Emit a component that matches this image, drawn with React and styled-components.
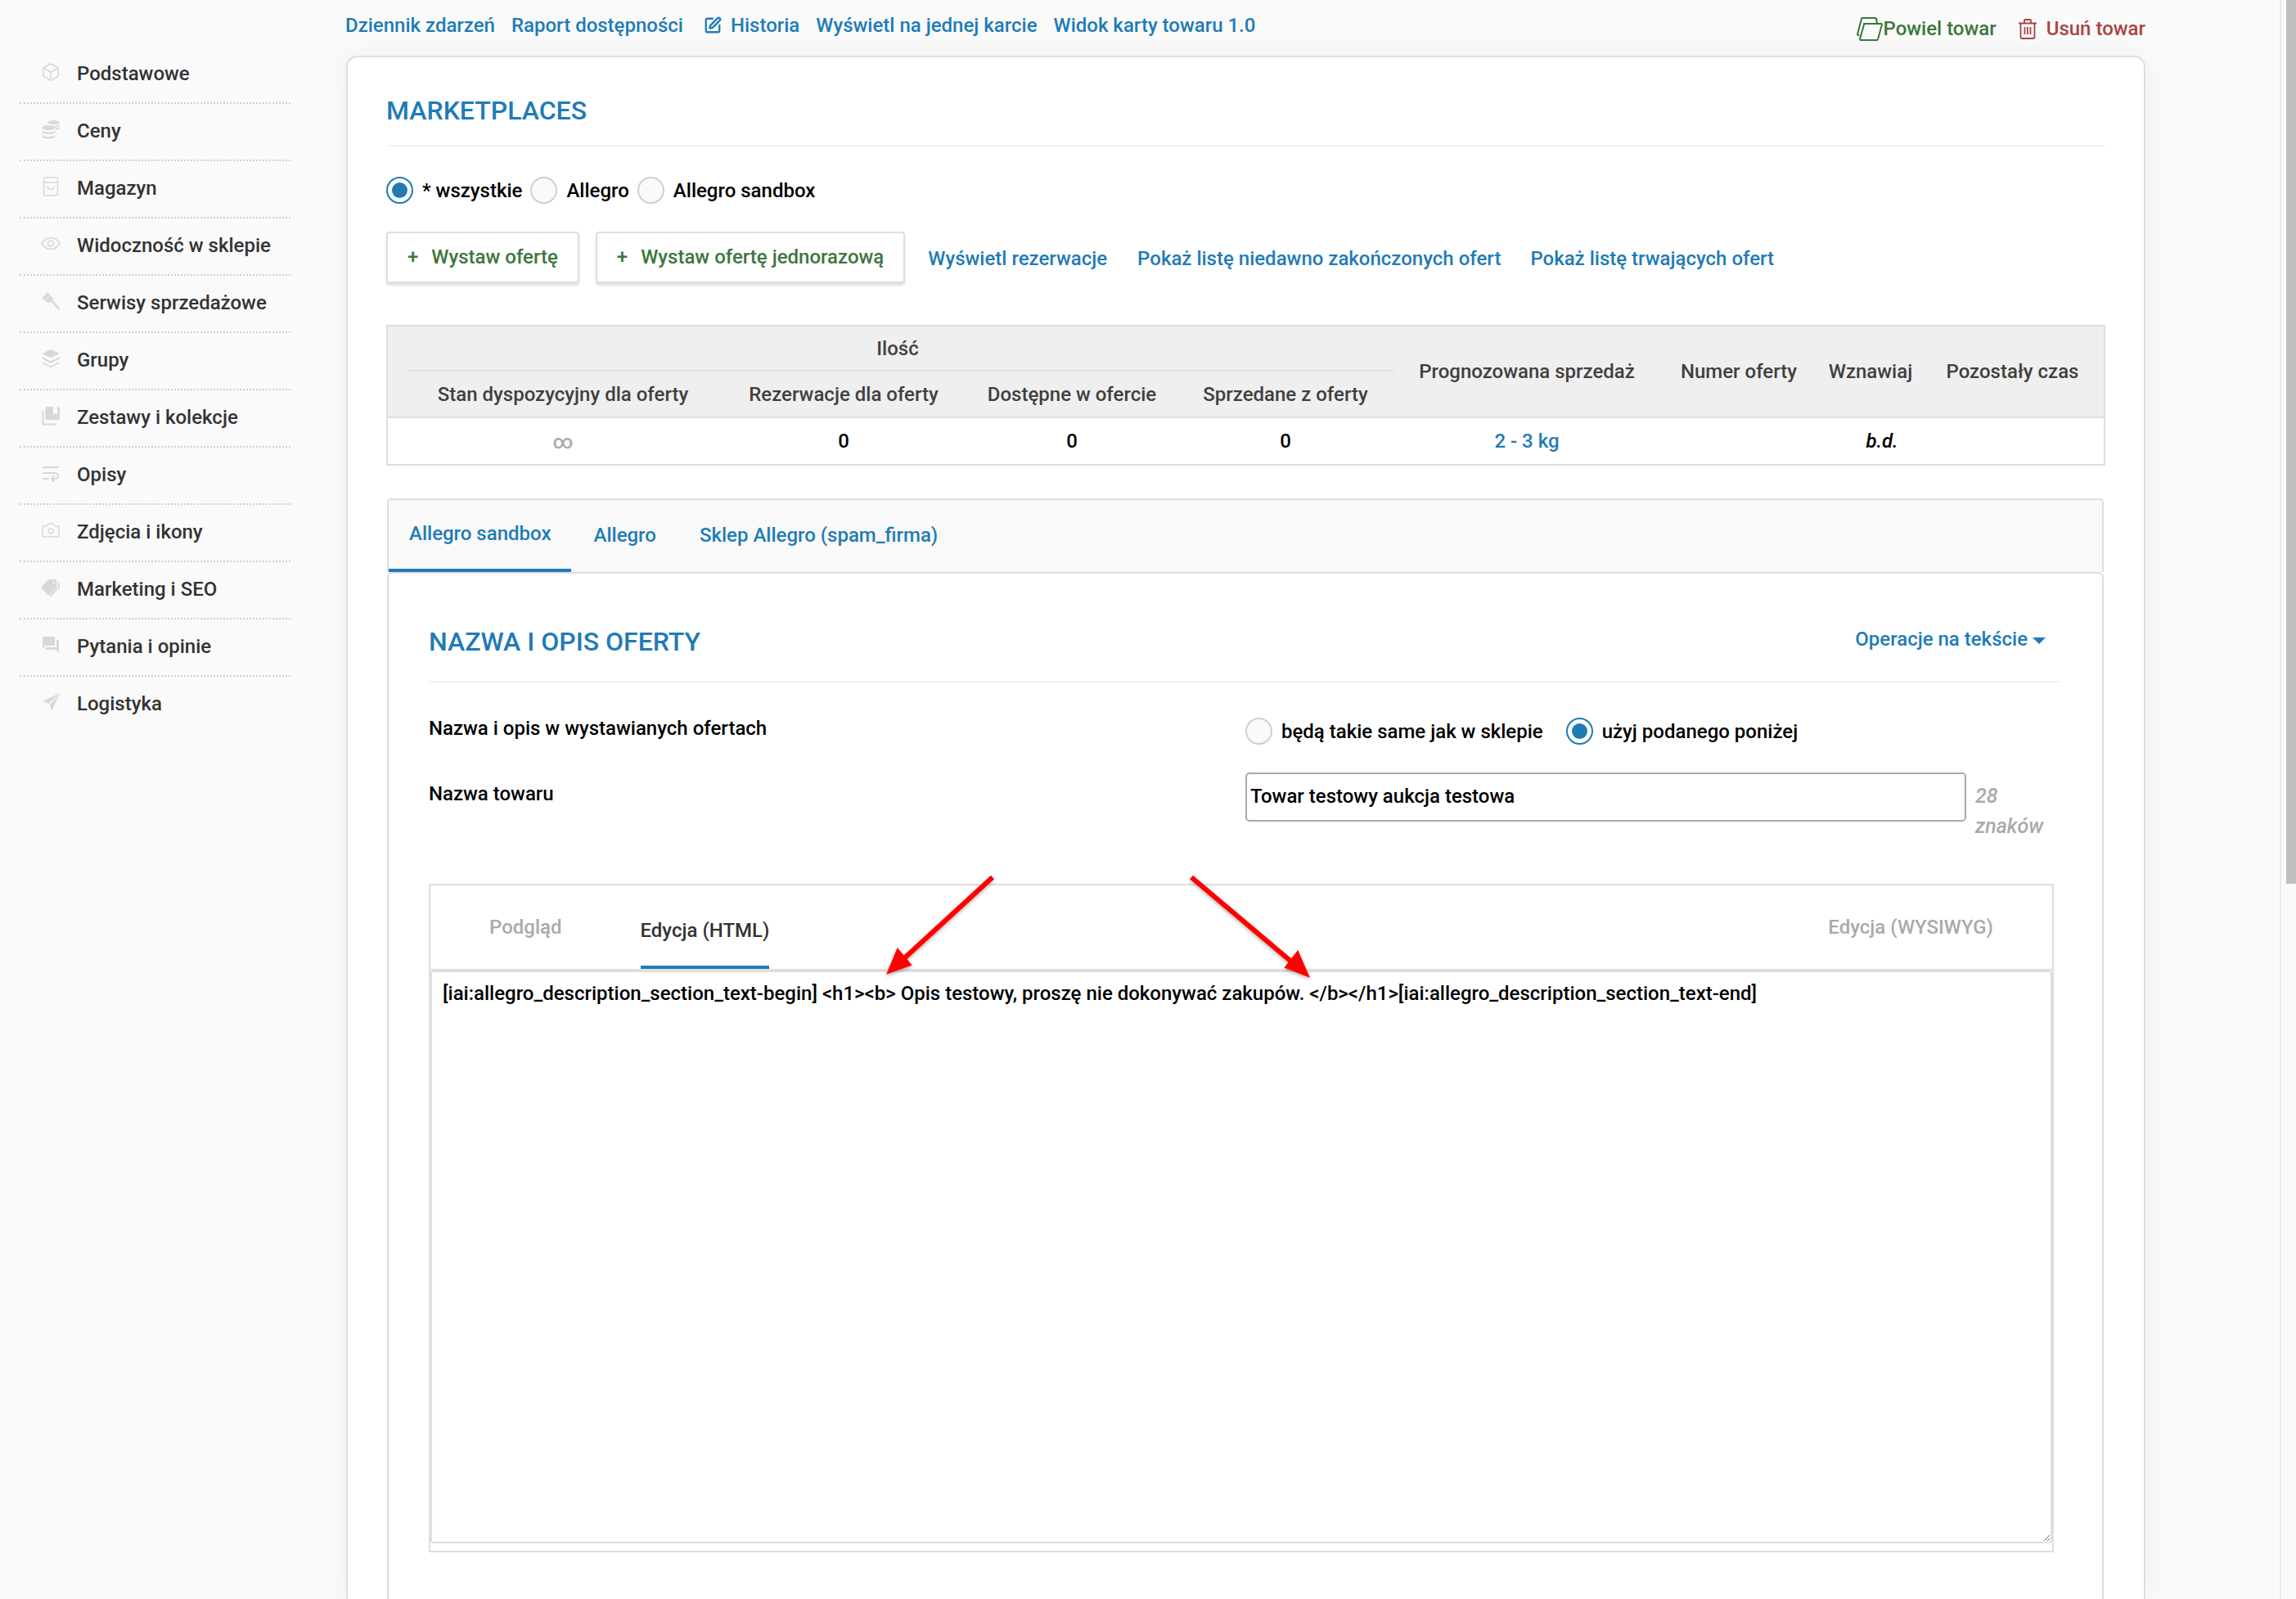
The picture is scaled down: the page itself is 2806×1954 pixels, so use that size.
import React from "react";
import styled, { createGlobalStyle } from "styled-components";
import { SquarePen, Box, Camera, WrapText } from "lucide-react";
import { MdForum } from "react-icons/md";

const Global = createGlobalStyle`
  html, body { margin: 0; padding: 0; overflow: hidden; background: #fafafa; }
  * { box-sizing: border-box; }
  body { font-family: Roboto, "Liberation Sans", sans-serif; font-weight: 500; font-size: 24px; line-height: 28px; color: #000; }
`;

const BLUE = "#1f7bb6";
const GREEN = "#3c763d";
const RED = "#a94442";
const LINE = "#dedede";

const Page = styled.div`
  position: relative; display: flex; width: 2806px; height: 1954px; overflow: hidden; background: #fafafa;
`;
const Sidebar = styled.nav`
  flex: 0 0 422px; padding: 57px 0 0 24px; display: flex; flex-direction: column;
`;
const SideItem = styled.div`
  width: 331px; height: 70px; padding: 0 0 3px 26px; display: flex; align-items: center;
  border-bottom: 2px dotted ${(p) => (p.$last ? "transparent" : "#cfcfcf")};
  color: #333; font-size: 24px;
`;
const SideIcon = styled.span`
  flex: 0 0 44px; display: flex; align-items: center; margin-top: -4px; color: #d8d8d8;
`;
const Main = styled.main`
  flex: 0 0 2200px; display: flex; flex-direction: column; min-width: 0;
`;
const TopBar = styled.div`
  height: 68px; flex: none; display: flex; justify-content: space-between;
`;
const TopLeft = styled.div`
  display: flex; align-items: center; gap: 20px; height: 62px;
`;
const TopRight = styled.div`
  display: flex; align-items: center; gap: 27px; height: 70px;
`;
const LinkA = styled.span`
  color: ${(p) => p.$color || BLUE}; display: inline-flex; align-items: center; white-space: nowrap; gap: ${(p) => p.$gap || 0}px;
  margin-left: ${(p) => p.$ml || 0}px;
`;
const Card = styled.section`
  flex: 1; background: #fff; border: 2px solid ${LINE}; border-bottom: 0; border-radius: 14px 14px 0 0;
  padding: 0 47px 0 47px; box-shadow: 0 0 36px rgba(0,0,0,.05); margin-left: 1px; min-height: 0; 
`;
const SectionHead = styled.div`
  height: ${(p) => p.$h}px; padding-top: ${(p) => p.$pt}px; border-bottom: 2px solid #f3f3f3;
  display: flex; align-items: center; justify-content: space-between;
`;
const Title = styled.h2`
  margin: 0; font-size: 32px; line-height: 40px; font-weight: 500; color: ${BLUE}; text-transform: uppercase;
`;
const RadioRow = styled.div`
  display: flex; align-items: center; margin-top: ${(p) => p.$mt || 0}px; height: 33px; white-space: nowrap;
`;
const RadioDot = styled.span`
  flex: none; width: 33px; height: 33px; border-radius: 50%; margin-left: ${(p) => p.$ml || 0}px; margin-right: 11px;
  background: ${(p) => (p.$on ? "#fff" : "#fafafa")};
  border: 2px solid ${(p) => (p.$on ? BLUE : "#cfcfcf")};
  display: flex; align-items: center; justify-content: center;
  &::after { content: ""; width: 19px; height: 19px; border-radius: 50%; background: ${(p) => (p.$on ? BLUE : "transparent")}; }
`;
const Actions = styled.div`
  display: flex; align-items: center; margin-top: 34px; height: 64px; white-space: nowrap;
`;
const Btn = styled.button`
  height: 63px; padding: 0 24px; margin: 0 ${(p) => p.$mr}px 0 0; background: #fff; border: 2px solid ${LINE}; border-radius: 4px;
  box-shadow: 0 3px 3px rgba(0,0,0,.12); font: inherit; color: ${GREEN}; display: inline-flex; align-items: center; gap: 16px; margin-top: -2px;
`;
const ActionLink = styled.span`
  color: ${BLUE}; margin-right: ${(p) => p.$mr}px; padding-top: 2px;
`;
const TableBox = styled.div`
  margin-top: 50px; border: 2px solid ${LINE}; 
`;
const COLS = "24px 380px 306px 252px 270px 322px 194px 128px 221px";
const HeadGrid = styled.div`
  display: grid; grid-template-columns: ${COLS}; grid-template-rows: 55px 55px; background: #efefef; border-bottom: 2px solid ${LINE}; color: #3f3f3f;
`;
const HeadCell = styled.div`
  grid-column: ${(p) => p.$col}; grid-row: ${(p) => p.$row}; display: flex; align-items: center; justify-content: center; white-space: nowrap;
  padding-right: ${(p) => p.$pr || 0}px;
  ${(p) => p.$rule && `border-bottom: 2px solid #e0e0e0; margin-right: 3px; padding-right: 7px;`}
`;
const BodyGrid = styled.div`
  display: grid; grid-template-columns: ${COLS}; height: 56px;
`;
const BodyCell = styled.div`
  grid-column: ${(p) => p.$col}; display: flex; align-items: center; justify-content: center; white-space: nowrap;
  padding-left: ${(p) => p.$pl || 0}px; padding-top: ${(p) => p.$pt || 0}px; padding-right: ${(p) => p.$pr || 0}px;
  color: ${(p) => p.$color || "#000"}; font-style: ${(p) => (p.$it ? "italic" : "normal")}; font-size: ${(p) => p.$fs || 24}px;
`;
const TabsWrap = styled.div`
  margin: 40px 2px 0 1px;
`;
const TabStrip = styled.div`
  height: 90px; background: #f9f9f9; border: 2px solid ${LINE}; border-bottom: 0; border-radius: 5px 5px 0 0; display: flex;
  align-items: stretch; gap: 1px;
`;
const TabItem = styled.div`
  padding: 0 ${(p) => p.$px}px 2px; display: flex; align-items: center; color: ${BLUE}; white-space: nowrap; height: 88px;
  ${(p) => p.$active && `border-bottom: 4px solid ${BLUE};`}
`;
const Panel = styled.div`
  border: 2px solid ${LINE}; border-radius: 6px 6px 0 0; border-bottom: 0; background: #fff; padding: 0 49px 60px 49px;
`;
const Form = styled.div`
  display: grid; grid-template-columns: 998px 1fr; margin-top: 43px; row-gap: 34px;
`;
const Label = styled.div`
  margin-top: -1px; padding-top: ${(p) => p.$pt || 0}px;
`;
const NameBox = styled.div`
  display: flex; gap: 11px; align-items: flex-start; height: 84px;
`;
const NameInput = styled.input`
  width: 881px; height: 60px; border: 2px solid #aaa; border-radius: 5px; padding: 0 4px 2px; font: inherit; color: #000; background: #fff; outline: none;
`;
const Counter = styled.div`
  padding-top: 10px; width: 92px; font-size: 25px; font-style: italic; color: #aaa; line-height: 37px;
`;
const Operations = styled.span`
  color: ${BLUE}; display: inline-flex; align-items: center; gap: 6px; margin: -6px 20px 0 0;
  &::after { content: ""; border-left: 8px solid transparent; border-right: 8px solid transparent; border-top: 8px solid ${BLUE}; margin-top: 3px; }
`;
const Editor = styled.div`
  margin-top: 52px; width: 1986px; border: 2px solid ${LINE}; padding-bottom: 9px;
`;
const EditorTabs = styled.div`
  height: 104px; border-bottom: 2px solid ${LINE}; display: flex; align-items: flex-start; padding: 0 72px 0 72px;
`;
const EditorTab = styled.div`
  height: 102px; white-space: nowrap; display: flex; align-items: center; box-sizing: border-box;
  margin-right: ${(p) => p.$mr || 0}px; margin-left: ${(p) => (p.$right ? "auto" : 0)};
  color: ${(p) => (p.$active ? "#333" : "#aaa")};
  padding: ${(p) => (p.$active ? "11px 0 0" : "0")};
  border-bottom: ${(p) => (p.$active ? `4px solid ${BLUE}` : "0")};
`;
const Area = styled.textarea`
  display: block; width: 100%; height: 700px; border: 2px solid ${LINE}; border-radius: 4px; padding: 12px 13px; margin: 0;
  font: inherit; color: #000; background: #fff; resize: both; outline: none; overflow: hidden;
`;
const Gutter = styled.div`
  margin-left: auto; flex: 0 0 20px; border-left: 2px solid #ebebeb; padding-left: 6px;
`;
const Thumb = styled.div`
  width: 12px; height: 1080px; background: #bfbfbf;
`;
const Overlay = styled.svg`
  position: absolute; left: 0; top: 0; pointer-events: none;
`;
const Ico = styled.svg`
  width: 24px; height: 24px; display: block; fill: currentColor;
`;

const Coins = () => (
  <Ico viewBox="0 0 24 24">
    <ellipse cx="15.5" cy="3.5" rx="7" ry="2.6" />
    <path d="M17 7.5c3 0 5.5-.8 6-2v2c-.5 1.2-3 2-6 2zM18 11c2.5-.2 4.6-.9 5-2v2c-.4 1.100-2.500 1.800-5 2z" />
    <ellipse cx="9.500" cy="10" rx="8" ry="3" />
    <path d="M1.500 12.500c0 1.700 3.600 3 8 3s8-1.300 8-3v2.500c0 1.700-3.600 3-8 3s-8-1.300-8-3zM1.500 18c0 1.700 3.600 3 8 3s8-1.300 8-3v2.500c0 1.700-3.600 3-8 3s-8-1.300-8-3z" />
  </Ico>
);
const Bag = () => (
  <Ico viewBox="0 0 24 24" style={{ fill: "none", stroke: "currentColor", strokeWidth: 1.5 }}>
    <path d="M3.500 7V3a2 2 0 0 1 2-2h13a2 2 0 0 1 2 2v4M3.500 7h17v14a2 2 0 0 1-2 2h-13a2 2 0 0 1-2-2z" />
    <path d="M8 11c0 3 2 4.500 4 4.500s4-1.500 4-4.500" />
  </Ico>
);
const Eye = () => (
  <Ico viewBox="0 0 24 24" style={{ fill: "none", stroke: "currentColor", strokeWidth: 1.500 }}>
    <path d="M.8 11.500C4 6.500 8 4.500 12 4.500s8 2 11.200 7C20 16.500 16 18.500 12 18.500s-8-2-11.200-7z" />
    <circle cx="12" cy="11.500" r="3.500" />
  </Ico>
);
const Gavel = () => (
  <Ico viewBox="0 0 24 24">
    <path d="M1 8.500 8 1.500 l3.500 2.500-7 7z" />
    <path d="M5 11.500 L11.500 5 l3.500 3.500-6 6z" />
    <path d="M11 11 l2-2 10.500 12-2 2z" />
  </Ico>
);
const Layers = () => (
  <Ico viewBox="0 0 24 24">
    <path d="M12 1 L22.500 6 L12 11.500 L1.500 6Z" />
    <path d="M1.500 10 L12 15.500 L22.500 10 V12.500 L12 18 L1.500 12.500Z" />
    <path d="M1.500 16 L12 21.500 L22.500 16 V18 L12 23.500 L1.500 18Z" />
  </Ico>
);
const Books = () => (
  <Ico viewBox="0 0 24 24">
    <path d="M1.500 6h2v15.500H19v2H3a1.500 1.500 0 0 1-1.500-1.500z" />
    <path d="M7 1h14.500A1.500 1.500 0 0 1 23 2.500v13a1.500 1.500 0 0 1-1.500 1.500H7a1.500 1.500 0 0 1-1.500-1.500v-13A1.500 1.500 0 0 1 7 1z" />
    <path d="M15 1h5v10l-2.500-2L15 11z" fill="#fafafa" />
  </Ico>
);
const Tags = () => (
  <Ico viewBox="0 0 24 24">
    <path d="M1 10.500 9.500 2h8a2 2 0 0 1 2 2v8L10.500 21a1.500 1.500 0 0 1-2 0L1 13a2 2 0 0 1 0-2.500z M15.500 5a1.200 1.200 0 1 0 .01 0z" fillRule="evenodd" />
    <path d="M22 6l1 1a2 2 0 0 1 0 2.500V12L13 22.500a1.500 1.500 0 0 1-2 0l-.5-.5 10.500-10.500V6z" />
  </Ico>
);
const Plane = () => (
  <Ico viewBox="0 0 24 24">
    <path d="M23 1 L2 11 L9.500 14 Z" />
    <path d="M23 1 L11 15.500 L13 23 Z" />
  </Ico>
);
const Copy = () => (
  <svg width="32" height="29" viewBox="0 0 32 29" fill="none" stroke={GREEN} strokeWidth="2" strokeLinejoin="round">
    <path d="M9 8h21a1 1 0 0 1 1 1l-5 18a1.500 1.500 0 0 1-1.500 1H5a1 1 0 0 1-1-1l5-18z" />
    <path d="M3 23 1 21 6 2a1 1 0 0 1 1-1h16a1 1 0 0 1 1 1l1 5" />
  </svg>
);
const Trash = () => (
  <svg width="22" height="25" viewBox="0 0 22 25" fill="none" stroke={RED} strokeWidth="1.800" strokeLinejoin="round">
    <path d="M0 5.500h22M7 5.500V2a1 1 0 0 1 1-1h6a1 1 0 0 1 1 1v3.500" />
    <path d="M2.500 5.500V22a2 2 0 0 0 2 2h13a2 2 0 0 0 2-2V5.500" />
    <path d="M7.500 10v9M11 10v9M14.500 10v9" />
  </svg>
);

const menu = [
  ["Podstawowe", <Box size={24} strokeWidth={1.5} />],
  ["Ceny", <Coins />],
  ["Magazyn", <Bag />],
  ["Widoczność w sklepie", <Eye />],
  ["Serwisy sprzedażowe", <Gavel />],
  ["Grupy", <Layers />],
  ["Zestawy i kolekcje", <Books />],
  ["Opisy", <WrapText size={24} strokeWidth={2} />],
  ["Zdjęcia i ikony", <Camera size={24} strokeWidth={1.5} />],
  ["Marketing i SEO", <Tags />],
  ["Pytania i opinie", <MdForum size={24} />],
  ["Logistyka", <Plane />],
];

const TEXT = "[iai:allegro_description_section_text-begin] <h1><b> Opis testowy, proszę nie dokonywać zakupów. </b></h1>[iai:allegro_description_section_text-end]";

export default function App() {
  return (
    <Page>
      <Global />
      <Sidebar>
        {menu.map(([label, icon], i) => (
          <SideItem key={label} $last={i === menu.length - 1}>
            <SideIcon>{icon}</SideIcon>
            {label}
          </SideItem>
        ))}
      </Sidebar>
      <Main>
        <TopBar>
          <TopLeft>
            <LinkA>Dziennik zdarzeń</LinkA>
            <LinkA>Raport dostępności</LinkA>
            <LinkA $gap={11} $ml={5}><SquarePen size={22} strokeWidth={2.5} />Historia</LinkA>
            <LinkA>Wyświetl na jednej karcie</LinkA>
            <LinkA>Widok karty towaru 1.0</LinkA>
          </TopLeft>
          <TopRight>
            <LinkA $color={GREEN}><Copy />Powiel towar</LinkA>
            <LinkA $color={RED} $gap={12}><Trash />Usuń towar</LinkA>
          </TopRight>
        </TopBar>
        <Card>
          <SectionHead $h={109} $pt={22}><Title>Marketplaces</Title></SectionHead>
          <RadioRow $mt={37}>
            <RadioDot $on />* wszystkie
            <RadioDot $ml={10} />Allegro
            <RadioDot $ml={10} />Allegro sandbox
          </RadioRow>
          <Actions>
            <Btn $mr={20}><span>+</span>Wystaw ofertę</Btn>
            <Btn $mr={28}><span>+</span>Wystaw ofertę jednorazową</Btn>
            <ActionLink $mr={37}>Wyświetl rezerwacje</ActionLink>
            <ActionLink $mr={36}>Pokaż listę niedawno zakończonych ofert</ActionLink>
            <ActionLink $mr={0}>Pokaż listę trwających ofert</ActionLink>
          </Actions>
          <TableBox>
            <HeadGrid>
              <HeadCell $col="2 / 6" $row="1" $rule>Ilość</HeadCell>
              <HeadCell $col="2" $row="2">Stan dyspozycyjny dla oferty</HeadCell>
              <HeadCell $col="3" $row="2">Rezerwacje dla oferty</HeadCell>
              <HeadCell $col="4" $row="2">Dostępne w ofercie</HeadCell>
              <HeadCell $col="5" $row="2">Sprzedane z oferty</HeadCell>
              <HeadCell $col="6" $row="1 / 3" $pr={2}>Prognozowana sprzedaż</HeadCell>
              <HeadCell $col="7" $row="1 / 3">Numer oferty</HeadCell>
              <HeadCell $col="8" $row="1 / 3">Wznawiaj</HeadCell>
              <HeadCell $col="9" $row="1 / 3" $pr={2}>Pozostały czas</HeadCell>
            </HeadGrid>
            <BodyGrid>
              <BodyCell $col="2" $color="#aaa" $fs={24} $pt={2}>∞</BodyCell>
              <BodyCell $col="3">0</BodyCell>
              <BodyCell $col="4">0</BodyCell>
              <BodyCell $col="5">0</BodyCell>
              <BodyCell $col="6" $color={BLUE} $pr={2}>2 - 3 kg</BodyCell>
              <BodyCell $col="8" $it $pl={28}>b.d.</BodyCell>
            </BodyGrid>
          </TableBox>
          <TabsWrap>
            <TabStrip>
              <TabItem $px={25} $active>Allegro sandbox</TabItem>
              <TabItem $px={26}>Allegro</TabItem>
              <TabItem $px={26}>Sklep Allegro (spam_firma)</TabItem>
            </TabStrip>
            <Panel>
              <SectionHead $h={133} $pt={35}>
                <Title>Nazwa i opis oferty</Title>
                <Operations>Operacje na tekście</Operations>
              </SectionHead>
              <Form>
                <Label>Nazwa i opis w wystawianych ofertach</Label>
                <RadioRow>
                  <RadioDot />będą takie same jak w sklepie
                  <RadioDot $on $ml={28} />użyj podanego poniżej
                </RadioRow>
                <Label $pt={13}>Nazwa towaru</Label>
                <NameBox>
                  <NameInput defaultValue="Towar testowy aukcja testowa" readOnly />
                  <Counter>28 znaków</Counter>
                </NameBox>
              </Form>
              <Editor>
                <EditorTabs>
                  <EditorTab $mr={96}>Podgląd</EditorTab>
                  <EditorTab $active>Edycja (HTML)</EditorTab>
                  <EditorTab $right>Edycja (WYSIWYG)</EditorTab>
                </EditorTabs>
                <Area defaultValue={TEXT} readOnly />
              </Editor>
            </Panel>
          </TabsWrap>
        </Card>
      </Main>
      <Gutter><Thumb /></Gutter>
      <Overlay width="2806" height="1954" viewBox="0 0 2806 1954">
        <defs>
          <filter id="arrowShadow" x="-20%" y="-20%" width="140%" height="140%">
            <feDropShadow dx="0" dy="2" stdDeviation="2" floodColor="#000" floodOpacity=".3" />
          </filter>
        </defs>
        <g filter="url(#arrowShadow)" fill="#f00" stroke="#f00" strokeWidth="6">
          <path d="M1213 1072 L1104 1172" fill="none" />
          <path d="M1085 1189 L1097 1160 L1113 1179 Z" strokeWidth="2" />
          <path d="M1456 1072 L1578 1175" fill="none" />
          <path d="M1599 1193 L1586 1163 L1571 1182 Z" strokeWidth="2" />
        </g>
      </Overlay>
    </Page>
  );
}
